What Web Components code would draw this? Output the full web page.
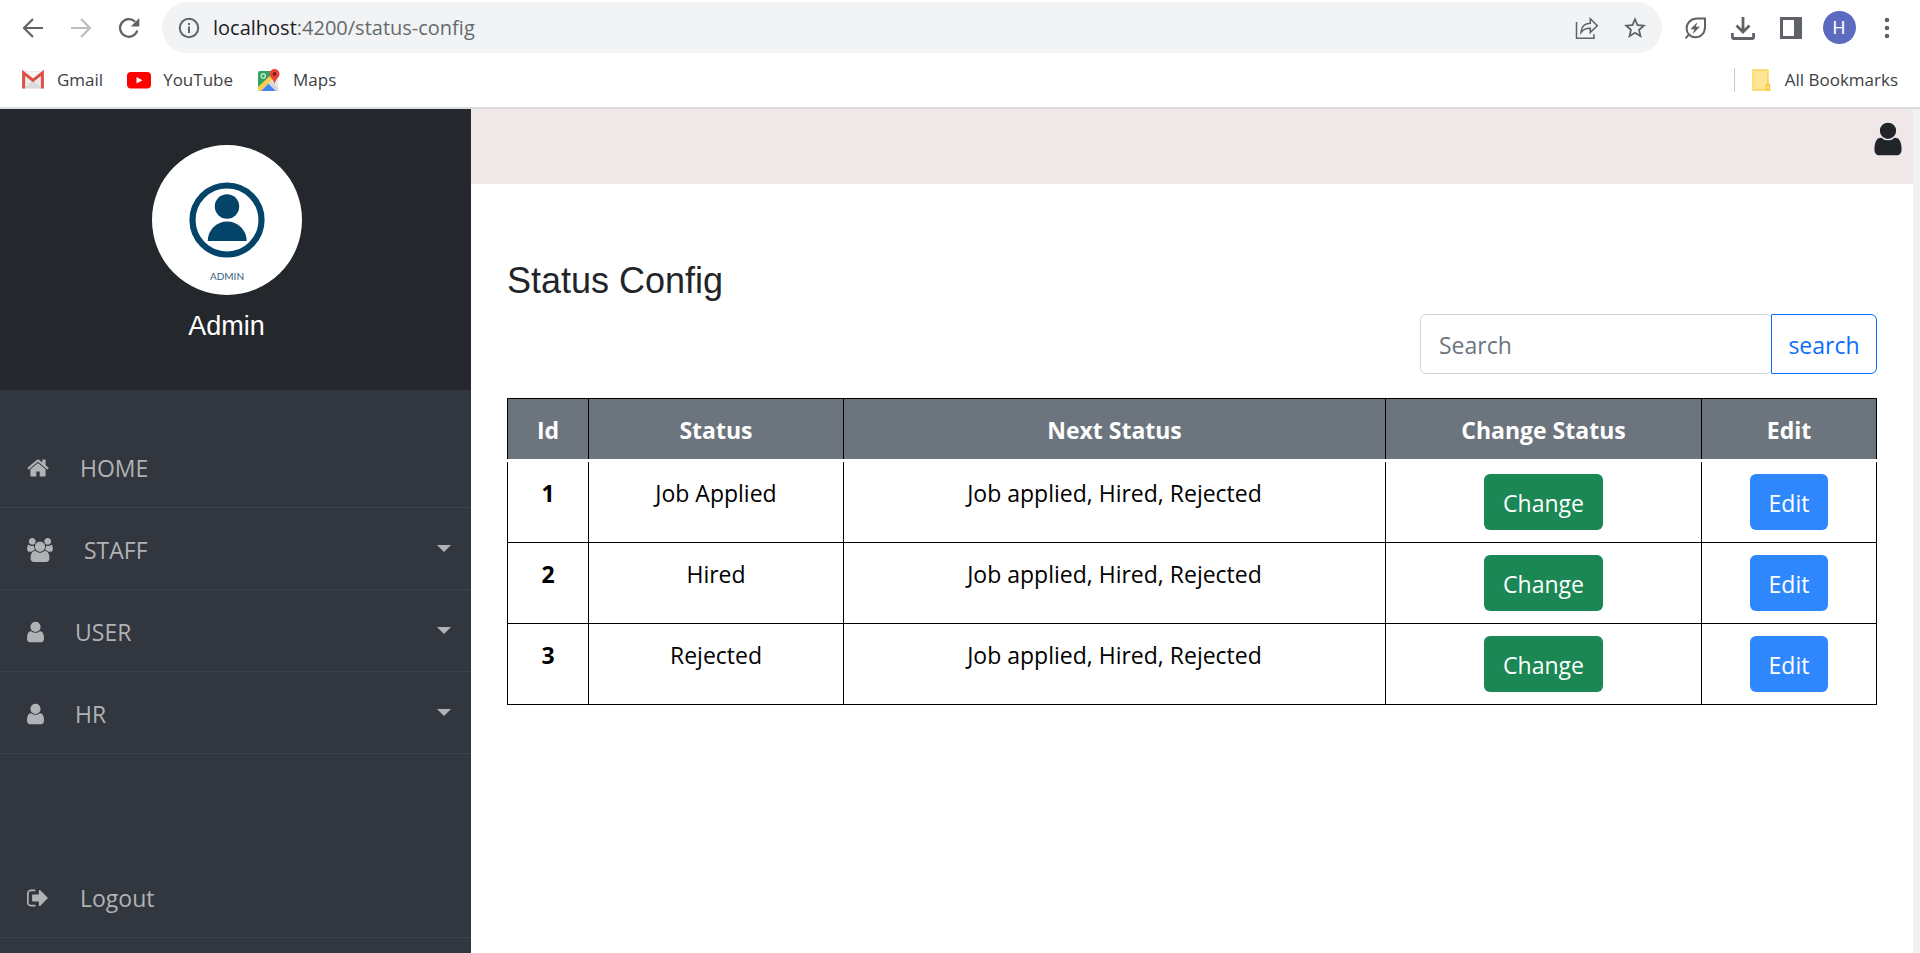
<!DOCTYPE html>
<html lang="en">
<head>
<meta charset="utf-8">
<title>Status Config</title>
<style>
  html, body { margin: 0; padding: 0; }
  body { font-family: "Open Sans", "Noto Sans", sans-serif; background: #fff; color: #212529; }
</style>
</head>
<body>
<browser-window>
  <browser-toolbar slot="toolbar"></browser-toolbar>
  <bookmarks-bar slot="bookmarks"></bookmarks-bar>
  <admin-shell>
    <side-nav slot="side">
      <nav-item icon="home" width="22">HOME</nav-item>
      <nav-item icon="users" width="26" expandable>STAFF</nav-item>
      <nav-item icon="user" width="17" expandable>USER</nav-item>
      <nav-item icon="user" width="17" expandable>HR</nav-item>
      <nav-item slot="end" icon="signout" width="22">Logout</nav-item>
    </side-nav>
    <page-header slot="top"></page-header>
    <h1 slot="title">Status Config</h1>
    <search-form></search-form>
    <status-table></status-table>
  </admin-shell>
</browser-window>

<script>
const ICONS = {
  home: ['64 0 1664 1792', 'M1472 992v480q0 26-19 45t-45 19h-384v-384h-256v384h-384q-26 0-45-19t-19-45v-480q0-1 .5-3t.5-3l575-474 575 474q1 2 1 6zm223-69l-62 74q-8 9-21 11h-3q-13 0-21-7l-692-577-692 577q-12 8-24 7-13-2-21-11l-62-74q-8-10-7-23.5t11-21.5l719-599q32-26 76-26t76 26l244 204v-195q0-14 9-23t23-9h192q14 0 23 9t9 23v408l219 182q10 8 11 21.5t-7 23.5z'],
  users: ['-64 0 1920 1792', 'M529 896q-162 5-265 128h-134q-82 0-138-40.5t-56-118.5q0-353 124-353 6 0 43.5 21t97.5 42.5 119 21.5q67 0 133-23-5 37-5 66 0 139 81 256zm1071 637q0 120-73 189.5t-194 69.5h-874q-121 0-194-69.5t-73-189.5q0-53 3.5-103.5t14-109 26.5-108.5 43-97.5 62-81 85.5-53.5 111.5-20q10 0 43 21.5t73 48 107 48 135 21.5 135-21.5 107-48 73-48 43-21.5q61 0 111.5 20t85.5 53.5 62 81 43 97.5 26.5 108.5 14 109 3.5 103.5zm-1024-1277q0 106-75 181t-181 75-181-75-75-181 75-181 181-75 181 75 75 181zm704 384q0 159-112.5 271.5t-271.5 112.5-271.5-112.5-112.5-271.5 112.5-271.5 271.5-112.5 271.5 112.5 112.5 271.5zm576 225q0 78-56 118.5t-138 40.5h-134q-103-123-265-128 81-117 81-256 0-29-5-66 66 23 133 23 59 0 119-21.5t97.5-42.5 43.5-21q124 0 124 353zm-128-609q0 106-75 181t-181 75-181-75-75-181 75-181 181-75 181 75 75 181z'],
  user: ['256 0 1280 1792', 'M1536 1399q0 109-62.5 187t-150.5 78h-854q-88 0-150.5-78t-62.5-187q0-85 8.5-160.5t31.5-152 58.5-131 94-89 134.5-34.5q131 128 313 128t313-128q76 0 134.5 34.5t94 89 58.5 131 31.5 152 8.5 160.5zm-256-887q0 159-112.5 271.5t-271.5 112.5-271.5-112.5-112.5-271.5 112.5-271.5 271.5-112.5 271.5 112.5 112.5 271.5z'],
  signout: ['64 0 1664 1792', 'M704 1440q0 4 1 20t.5 26.5-3 23.5-10 19.5-20.5 6.5h-320q-119 0-203.5-84.5t-84.5-203.5v-704q0-119 84.5-203.5t203.5-84.5h320q13 0 22.5 9.5t9.5 22.5q0 4 1 20t.5 26.5-3 23.5-10 19.5-20.5 6.5h-320q-66 0-113 47t-47 113v704q0 66 47 113t113 47h312l11.5 1 11.5 3 8 5.5 7 9 2 13.5zm928-544q0 26-19 45l-544 544q-19 19-45 19t-45-19-19-45v-288h-448q-26 0-45-19t-19-45v-384q0-26 19-45t45-19h448v-288q0-26 19-45t45-19 45 19l544 544q19 19 19 45z']
};
const glyph = (name, w, h) =>
  `<svg width="${w}" height="${h}" viewBox="${ICONS[name][0]}" fill="currentColor" aria-hidden="true"><path d="${ICONS[name][1]}"/></svg>`;

function define(name, html) {
  customElements.define(name, class extends HTMLElement {
    constructor() {
      super();
      this.attachShadow({ mode: 'open' });
    }
    connectedCallback() {
      this.shadowRoot.innerHTML = typeof html === 'function' ? html(this) : html;
    }
  });
}

define('browser-window', `
  <style>
    :host { display: flex; flex-direction: column; min-height: 100vh; }
    .chrome { background: #fff; border-bottom: 2px solid #dadcde; }
    .view { flex: 1; display: flex; }
    .page { flex: 1; min-width: 0; display: flex; }
    .track { flex: 0 0 7px; background: #f1f1f1; }
  </style>
  <div class="chrome"><slot name="toolbar"></slot><slot name="bookmarks"></slot></div>
  <div class="view"><div class="page"><slot></slot></div><div class="track"></div></div>`);

define('tool-button', el => `
  <style>
    :host { display: block; flex: 0 0 48px; color: #5f6368; }
    :host([disabled]) { color: #bcbec0; }
    button { all: unset; box-sizing: border-box; width: 100%; height: 51px; display: flex; align-items: center; justify-content: center; }
  </style>
  <button type="button" aria-label="${el.getAttribute('label')}"><slot></slot></button>`);

define('browser-toolbar', `
  <style>
    :host { display: flex; align-items: center; padding: 2px 9px 0; }
    svg { display: block; }
    .address { flex: 1; margin: 0 9px; height: 51px; border-radius: 26px; background: #f1f3f4; display: flex; align-items: center; padding-left: 16px; padding-right: 3px; gap: 13px; color: #5f6368; }
    .url { flex: 1; font-size: 20px; line-height: 28px; color: #666a6e; }
    .url b { font-weight: 400; color: #202124; }
    .me { width: 33px; height: 33px; border-radius: 50%; background: #5c6bc0; color: #fff; font: 18px/33px Roboto, sans-serif; text-align: center; }
    .actions { display: flex; }
  </style>
  <tool-button label="Back"><svg width="22" height="22" viewBox="0 0 22 22" fill="none" stroke="currentColor" stroke-width="2.2"><path d="M21 11H2.5M11 2L2 11l9 9"/></svg></tool-button>
  <tool-button label="Forward" disabled><svg width="22" height="22" viewBox="0 0 22 22" fill="none" stroke="currentColor" stroke-width="2.2"><path d="M1 11h18.500M11 2l9 9-9 9"/></svg></tool-button>
  <tool-button label="Reload"><svg width="22" height="22" viewBox="0 0 22 22"><path d="M19.300 13.500A8.800 8.800 0 1 1 17.200 4.800" fill="none" stroke="currentColor" stroke-width="2.300"/><path d="M21.300 1v8.500h-8.500z" fill="currentColor"/></svg></tool-button>
  <div class="address">
    <svg width="22" height="22" viewBox="0 0 22 22"><circle cx="11" cy="11" r="9.200" fill="none" stroke="currentColor" stroke-width="2"/><path d="M10 9.500h2v6.500h-2zM10 6h2v2h-2z" fill="currentColor"/></svg>
    <div class="url"><b>localhost</b>:4200/status-config</div>
    <div class="actions">
      <tool-button label="Share"><svg width="24" height="24" viewBox="0 0 24 24" fill="none" stroke="currentColor" stroke-width="1.500"><path d="M1.500 6v16.200h17.500v-4"/><path d="M6 16.500c.2-5.500 3.500-9 9.300-9.300V2.800l7 7-7 6.600v-4.200c-4.300-.2-7 1-9.300 4.300z"/></svg></tool-button>
      <tool-button label="Bookmark this tab"><svg width="24" height="24" viewBox="0 0 24 24"><path d="M22 9.240l-7.190-.62L12 2 9.190 8.630 2 9.240l5.460 4.730L5.820 21 12 17.270 18.180 21l-1.630-7.030L22 9.240zM12 15.400l-3.760 2.270 1-4.280-3.320-2.880 4.380-.38L12 6.100l1.710 4.040 4.380.38-3.320 2.880 1 4.280L12 15.400z" fill="currentColor" transform="translate(-1.200 -1.200) scale(1.100)"/></svg></tool-button>
    </div>
  </div>
  <tool-button label="Energy saver"><svg width="24" height="24" viewBox="0 0 24 24" fill="none" stroke="currentColor" stroke-width="2"><path d="M22 2.600H14C8 2.600 3.600 7 3.600 12.400 3.600 17.500 7.500 21.300 12.400 21.300 18 21.300 22 17 22 11z"/><path d="M6.500 17.800L2.500 22.300"/><path d="M14.300 6.300L7.300 13.200h4L9.700 18l7.400-7.200h-4.200z" fill="currentColor" stroke="none"/></svg></tool-button>
  <tool-button label="Downloads"><svg width="26" height="26" viewBox="0 0 26 26" fill="none" stroke="currentColor" stroke-width="2.800"><path d="M13 2v14M6.500 10.500L13 17l6.500-6.500M2.400 18v4.500q0 1 1 1h19.200q1 0 1-1V18"/></svg></tool-button>
  <tool-button label="Side panel"><svg width="22" height="22" viewBox="0 0 22 22"><path d="M0 0h22v22H0zM3 3v16h11V3z" fill="currentColor" fill-rule="evenodd"/></svg></tool-button>
  <tool-button label="Profile"><div class="me">H</div></tool-button>
  <tool-button label="Menu"><svg width="6" height="22" viewBox="0 0 6 22" fill="currentColor"><circle cx="3" cy="3" r="2.300"/><circle cx="3" cy="11" r="2.300"/><circle cx="3" cy="19" r="2.300"/></svg></tool-button>`);

define('bookmark-link', `
  <style>
    :host { display: block; }
    a { display: flex; align-items: center; gap: 12px; color: #3c4043; text-decoration: none; font-size: 17px; line-height: 24px; }
  </style>
  <a href="#"><slot name="icon"></slot><slot></slot></a>`);

define('bookmarks-bar', `
  <style>
    :host { display: flex; align-items: center; gap: 24px; height: 54px; padding: 0 22px 0 21px; }
    svg { display: block; }
    .rest { margin-left: auto; display: flex; align-items: center; gap: 14px; }
    .rule { width: 1px; height: 24px; background: #c8cacc; }
  </style>
  <bookmark-link><svg slot="icon" width="24" height="24" viewBox="0 0 24 24"><path d="M2 3h20v17.500H2z" fill="#ececec"/><path d="M2 20.500L12 12l10 8.500z" fill="#dcdcdc"/><path d="M3 4l9 7.500L21 4z" fill="#f7f7f7"/><path d="M2.600 20.500V4.800L12 12.400l9.400-7.600v15.700" fill="none" stroke="#dd5044" stroke-width="3"/></svg>Gmail</bookmark-link>
  <bookmark-link><svg slot="icon" width="24" height="24" viewBox="0 0 24 24"><rect y="4" width="24" height="16.500" rx="4" fill="#f00"/><path d="M9.500 9v6.600l6-3.300z" fill="#fff"/></svg>YouTube</bookmark-link>
  <bookmark-link><svg slot="icon" width="24" height="24" viewBox="0 0 24 24"><rect x="1" y="3" width="20" height="20" rx="2" fill="#34a261"/><path d="M1 20L18 5l3 2v14q0 2-2 2H3q-2 0-2-2z" fill="#e8e8e8"/><path d="M1 19L16 5l3 3L4 23H3q-2 0-2-2z" fill="#fcd04b"/><path d="M4 23l7.500-7.500L19 23z" fill="#4285f4"/><path d="M11.500 15.500L14 13l7 7v1q0 2-2 2z" fill="#d5d7da"/><circle cx="6.200" cy="8" r="2.200" fill="none" stroke="#d6f0dd" stroke-width="1.200"/><path d="M17.500 1a5 5 0 0 1 5 5c0 4-4.200 4.500-5 10.500C16.700 10.500 12.500 10 12.500 6a5 5 0 0 1 5-5z" fill="#ea4335"/><circle cx="17.500" cy="6" r="1.900" fill="#7b2019"/></svg>Maps</bookmark-link>
  <div class="rest"><div class="rule"></div>
    <bookmark-link><svg slot="icon" width="24" height="24" viewBox="0 0 24 24"><path d="M4 2h15v14.500h1.500V22H4z" fill="#ffe694" stroke="#f8d34f" stroke-width="1.300"/><path d="M17.500 22v-5.500h3V22z" fill="#ffe694" stroke="#efc02c" stroke-width="1.200"/></svg>All Bookmarks</bookmark-link>
  </div>`);

define('admin-shell', `
  <style>
    :host { flex: 1; display: flex; min-width: 0; }
    main { flex: 1; min-width: 0; background: #fff; }
    .content { padding: 75px 36px 36px; }
    ::slotted(h1) { margin: 0 0 12px; font: 400 36px/43px "Liberation Sans", Arial, sans-serif; color: #212529; }
  </style>
  <slot name="side"></slot>
  <main><slot name="top"></slot><div class="content"><slot name="title"></slot><slot></slot></div></main>`);

define('side-nav', `
  <style>
    :host { flex: 0 0 471px; display: flex; flex-direction: column; background: #32363e; }
    header { box-sizing: border-box; height: 281px; padding: 36px 18px 0 0; background: #24272b; display: flex; flex-direction: column; align-items: center; gap: 15px; }
    .avatar { display: block; border-radius: 50%; background: #fff; }
    h2 { margin: 0; font: 400 27px/33px "Liberation Sans", Arial, sans-serif; color: #fff; }
    nav { padding-top: 36px; display: flex; flex-direction: column; }
    .end { padding-top: 102px; }
  </style>
  <header>
    <svg class="avatar" width="150" height="150" viewBox="0 0 150 150" role="img" aria-label="Administrator portrait">
      <circle cx="75" cy="75" r="34.500" fill="none" stroke="#034468" stroke-width="6.200"/>
      <circle cx="75" cy="61.500" r="12.200" fill="#034468"/>
      <path d="M55.700 96a19.500 19.500 0 0 1 39 0z" fill="#034468"/>
      <text x="75" y="135" text-anchor="middle" font-family="Lato, sans-serif" font-size="10" fill="#34607d">ADMIN</text>
    </svg>
    <h2>Admin</h2>
  </header>
  <nav><slot></slot><div class="end"><slot name="end"></slot></div></nav>`);

define('nav-item', el => `
  <style>
    :host { display: block; border-bottom: 1px solid #3c4049; }
    a { display: flex; align-items: center; padding: 24px 20px 21px 27px; color: #b0b2b5; text-decoration: none; font-size: 23px; line-height: 36px; }
    svg { display: block; margin-right: 31px; }
    .caret { margin: 0 0 3px auto; border: 7px solid transparent; border-top-color: currentColor; border-bottom: 0; }
  </style>
  <a href="#">${glyph(el.getAttribute('icon'), el.getAttribute('width'), 24)}<slot></slot>${el.hasAttribute('expandable') ? '<span class="caret"></span>' : ''}</a>`);

define('page-header', `
  <style>
    :host { display: flex; justify-content: flex-end; height: 75px; background: #f0e7e8; color: #212529; }
    button { all: unset; height: 38px; padding: 11px 11px 0 0; }
    svg { display: block; }
  </style>
  <button type="button" aria-label="Account">${glyph('user', 28, 38)}</button>`);

define('search-form', `
  <style>
    :host { display: block; margin-bottom: 24px; }
    form { display: flex; justify-content: flex-end; margin: 0; }
    input, button { box-sizing: border-box; height: 60px; margin: 0; font: 23px/36px "Open Sans", "Noto Sans", sans-serif; background: #fff; }
    input { width: 352px; padding: 2px 18px 0; border: 1px solid #ced4da; border-radius: 6px; color: #212529; outline: 0; }
    input::placeholder { color: #6c757d; opacity: 1; }
    button { width: 106px; padding: 2px 0 0; margin-left: -1px; border: 1px solid #0d6efd; border-radius: 0 6px 6px 0; color: #0d6efd; }
  </style>
  <form role="search"><input type="search" placeholder="Search" aria-label="Search"><button type="button">search</button></form>`);

define('action-button', el => `
  <style>
    :host { display: flex; justify-content: center; }
    button { box-sizing: border-box; width: ${el.getAttribute('kind') === 'change' ? 119 : 78}px; height: 56px; margin: 0; padding: 2px 0 0; border: 0; border-radius: 6px; color: #fff; font: 23px/36px "Open Sans", "Noto Sans", sans-serif; background: ${el.getAttribute('kind') === 'change' ? '#1a8754' : '#2f87fe'}; }
  </style>
  <button type="button"><slot></slot></button>`);

define('status-table', () => {
  const rows = ['Job Applied', 'Hired', 'Rejected'].map((status, i) => `
    <tr><th scope="row">${i + 1}</th><td>${status}</td><td>Job applied, Hired, Rejected</td>
    <td class="act"><action-button kind="change">Change</action-button></td><td class="act"><action-button kind="edit">Edit</action-button></td></tr>`).join('');
  return `
  <style>
    :host { display: block; }
    table { width: 100%; table-layout: fixed; border-collapse: collapse; font-size: 23px; line-height: 36px; color: #000; text-align: center; }
    th, td { padding: 13px 12px 11px; border: 1px solid #000; vertical-align: top; }
    th { font-weight: 700; }
    .act { padding: 12px; }
    thead th { background: #6c757d; color: #fff; border-bottom: 3px solid #fff; }
    .id { width: 81px; } .status { width: 255px; } .change { width: 316px; } .edit { width: 175px; }
  </style>
  <table>
    <colgroup><col class="id"><col class="status"><col><col class="change"><col class="edit"></colgroup>
    <thead><tr><th scope="col">Id</th><th scope="col">Status</th><th scope="col">Next Status</th><th scope="col">Change Status</th><th scope="col">Edit</th></tr></thead>
    <tbody>${rows}</tbody>
  </table>`;
});
</script>
</body>
</html>
